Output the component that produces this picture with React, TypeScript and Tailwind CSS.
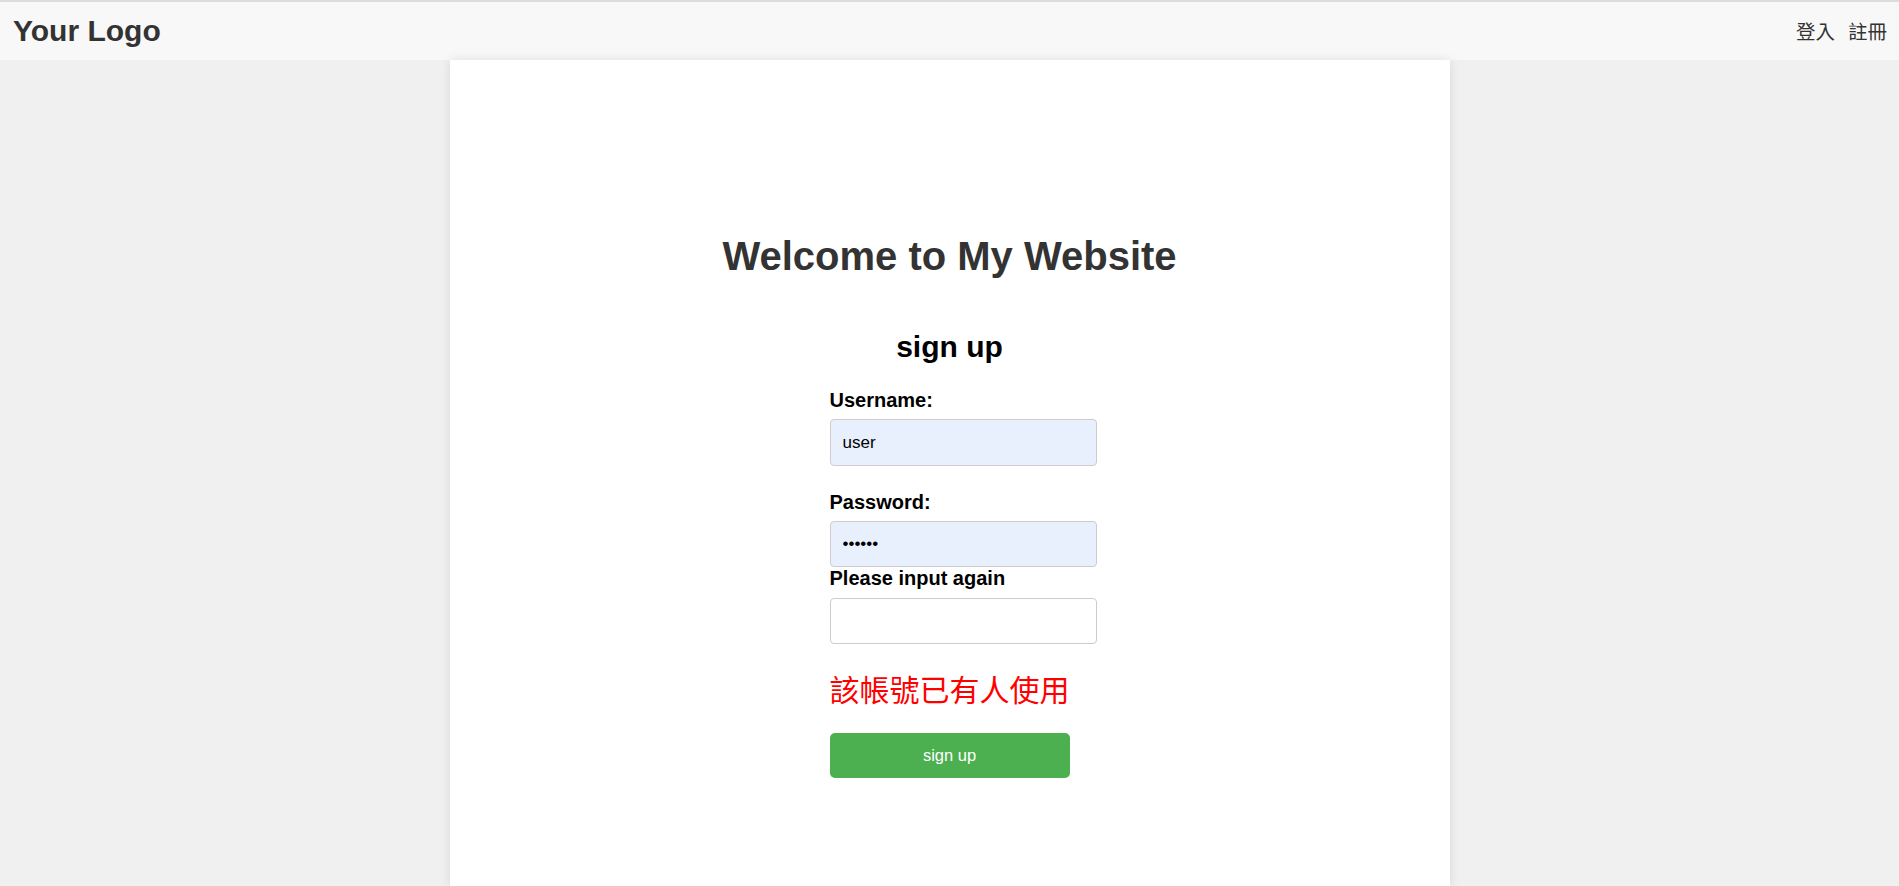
import React from "react";

const sans = { fontFamily: '"Liberation Sans", Arial, "Noto Sans CJK TC", sans-serif' };

export default function App() {
  return (
    <div
      className="min-h-screen flex flex-col bg-[#f0f0f0] font-['Liberation_Sans','Noto_Sans_CJK_TC',sans-serif]"
    >
      <header className="h-[60px] shrink-0 border-t-2 border-[#dcdcdc] bg-[#f8f8f8] flex items-center justify-between pl-[13px] pr-[12px]">
        <div className="text-[30px] font-bold text-[#333] leading-[34px]">Your Logo</div>
        <nav className="flex items-center text-[19.5px] text-[#333] font-['Noto_Sans_CJK_TC',sans-serif] leading-[24px]">
          <a className="cursor-pointer">登入</a>
          <a className="cursor-pointer ml-[13px]">註冊</a>
        </nav>
      </header>

      <main className="flex-1 w-[1000px] mx-auto bg-white shadow-[0_0_10px_rgba(0,0,0,0.1)] pt-[173px] pb-[80px]">
        <h1 className="text-center text-[40px] leading-[46px] font-bold text-[#333]">
          Welcome to My Website
        </h1>
        <h2 className="mt-[50px] text-center text-[30px] leading-[35px] font-bold text-black">
          sign up
        </h2>

        <form className="w-[240px] mx-auto mt-[25px]" onSubmit={(e) => e.preventDefault()}>
          <label className="block text-[20px] leading-[23px] font-bold text-black mb-[7px]">
            Username:
          </label>
          <input
            type="text"
            readOnly
            value="user"
            className="block w-[267px] h-[47px] px-[12px] border border-[#cccccc] rounded-[4px] bg-[#e8f0fe] text-[17px] text-black outline-none"
          />

          <label className="block mt-[25px] text-[20px] leading-[23px] font-bold text-black mb-[7px]">
            Password:
          </label>
          <input
            type="password"
            readOnly
            value="123456"
            className="block w-[267px] h-[46px] px-[12px] border border-[#cccccc] rounded-[4px] bg-[#e8f0fe] text-[17px] text-black outline-none"
          />

          <label className="block text-[20px] leading-[23px] font-bold text-black mb-[8px]">
            Please input again
          </label>
          <input
            type="password"
            readOnly
            value=""
            className="block w-[267px] h-[46px] px-[12px] border border-[#cccccc] rounded-[4px] bg-white text-[17px] text-black outline-none"
          />

          <p className="mt-[27px] text-[30px] leading-[34px] text-[#ff0000] font-['Noto_Sans_CJK_TC',sans-serif] whitespace-nowrap">
            該帳號已有人使用
          </p>

          <button
            type="submit"
            className="mt-[28px] block w-[240px] h-[45px] rounded-[5px] bg-[#4caf50] text-white text-[16.5px]"
            style={sans}
          >
            sign up
          </button>
        </form>
      </main>
    </div>
  );
}
